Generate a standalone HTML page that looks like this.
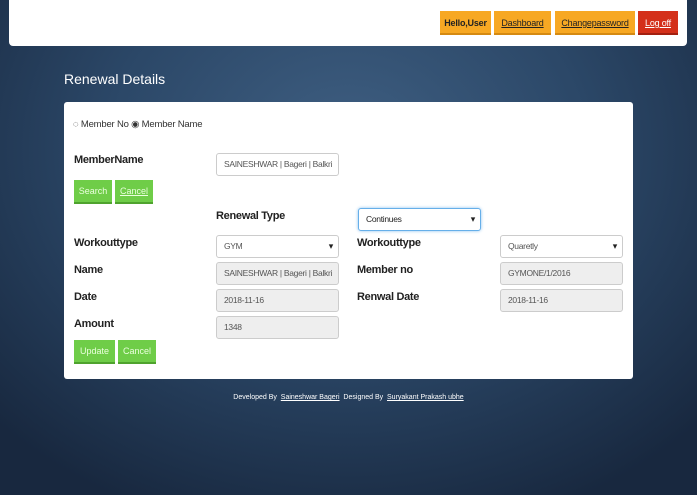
<!DOCTYPE html>
<html><head><style>
body{margin:0;width:697px;height:495px;overflow:hidden;font-family:"Liberation Sans",sans-serif;background:radial-gradient(ellipse 70% 80% at 50% 30%,#3f5f82 0%,#2b4767 50%,#18283f 100%);position:relative}
.a{position:absolute;white-space:nowrap}
.hdr{left:9px;top:0;width:678px;height:46px;background:#fff;border-radius:0 0 4px 4px}
.nb{top:11px;height:24px;background:#f7a823;color:#222;font-size:9px;line-height:24px;text-align:center;border-bottom:2px solid #d58a12;box-sizing:border-box;letter-spacing:-0.2px}
.nb u{text-decoration:underline}
.panel{left:64px;top:102px;width:569px;height:277px;background:#fff;border-radius:3px}
.lbl{font-size:11px;font-weight:bold;color:#222;letter-spacing:-0.3px}
.inp{width:123px;height:23px;border:1px solid #ccc;border-radius:3px;box-sizing:border-box;font-size:8.5px;color:#555;line-height:21px;padding-left:7px;background:#fff;overflow:hidden;letter-spacing:-0.3px}
.ro{background:#eee}
.sel::after{content:"▾";position:absolute;right:5px;top:0;font-size:9px;color:#222}
.btn{height:24px;background:#6fcd48;border-bottom:2px solid #4fa32e;box-sizing:border-box;color:#eaffdd;font-size:9px;line-height:22px;text-align:center}
</style></head><body>
<div class="a hdr"></div>
<div class="a nb" style="left:440px;width:51px;font-weight:bold">Hello,User</div>
<div class="a nb" style="left:494px;width:57px"><u>Dashboard</u></div>
<div class="a nb" style="left:555px;width:80px"><u>Changepassword</u></div>
<div class="a nb" style="left:638px;width:40px;background:#d4301a;color:#fff;border-bottom-color:#a32010"><u>Log off</u></div>
<div class="a" style="left:64px;top:71px;color:#fff;font-size:14px">Renewal Details</div>
<div class="a panel"></div>
<div class="a" style="left:73px;top:119px;font-size:9.5px;color:#333;letter-spacing:-0.2px">◌ Member No ◉ Member Name</div>
<div class="a lbl" style="left:74px;top:154px">MemberName</div>
<div class="a inp" style="left:216px;top:153px">SAINESHWAR | Bageri | Balkri</div>
<div class="a btn" style="left:74px;top:180px;width:38px">Search</div>
<div class="a btn" style="left:115px;top:180px;width:38px"><u>Cancel</u></div>
<div class="a lbl" style="left:216px;top:210px">Renewal Type</div>
<div class="a inp sel" style="left:358px;top:208px;border-color:#66afe9;box-shadow:0 0 3px #8bc0ee;color:#222">Continues</div>
<div class="a lbl" style="left:74px;top:237px">Workouttype</div>
<div class="a inp sel" style="left:216px;top:235px">GYM</div>
<div class="a lbl" style="left:357px;top:237px">Workouttype</div>
<div class="a inp sel" style="left:500px;top:235px">Quaretly</div>
<div class="a lbl" style="left:74px;top:264px">Name</div>
<div class="a inp ro" style="left:216px;top:262px">SAINESHWAR | Bageri | Balkri</div>
<div class="a lbl" style="left:357px;top:264px">Member no</div>
<div class="a inp ro" style="left:500px;top:262px">GYMONE/1/2016</div>
<div class="a lbl" style="left:74px;top:291px">Date</div>
<div class="a inp ro" style="left:216px;top:289px">2018-11-16</div>
<div class="a lbl" style="left:357px;top:291px">Renwal Date</div>
<div class="a inp ro" style="left:500px;top:289px">2018-11-16</div>
<div class="a lbl" style="left:74px;top:318px">Amount</div>
<div class="a inp ro" style="left:216px;top:316px">1348</div>
<div class="a btn" style="left:74px;top:340px;width:41px">Update</div>
<div class="a btn" style="left:118px;top:340px;width:38px">Cancel</div>
<div class="a" style="left:0;width:697px;top:394px;text-align:center;color:#fff;font-size:7px">Developed By &nbsp;<u>Saineshwar Bageri</u>&nbsp; Designed By &nbsp;<u>Suryakant Prakash ubhe</u></div>
</body></html>
